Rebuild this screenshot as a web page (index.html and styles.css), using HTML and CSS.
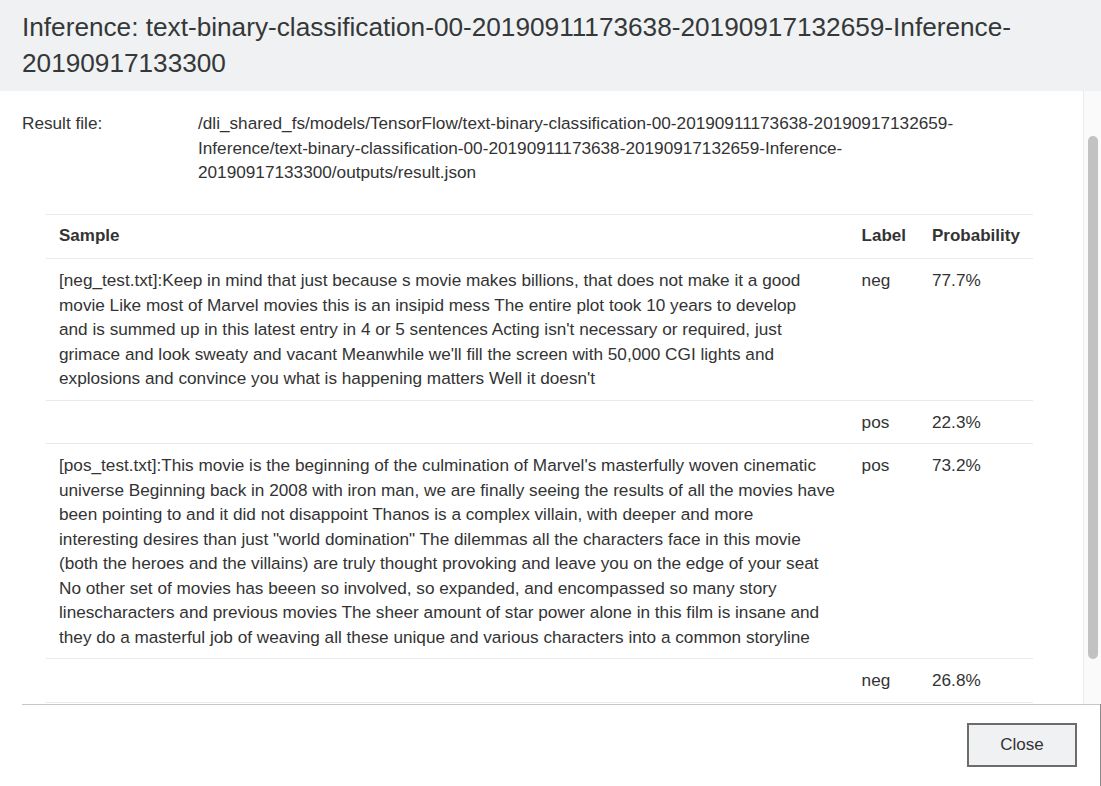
FILE: index.html
```html
<!DOCTYPE html>
<html>
<head>
<meta charset="utf-8">
<link rel="stylesheet" href="styles.css">
</head>
<body>
<div class="modal">
  <div class="modal-header">
    <h1 class="title">Inference: text-binary-classification-00-20190911173638-20190917132659-Inference-20190917133300</h1>
  </div>
  <div class="modal-main">
    <div class="modal-body">
      <div class="info-row">
        <div class="info-label">Result file:</div>
        <div class="info-value">/dli_shared_fs/models/TensorFlow/text-binary-classification-00-20190911173638-20190917132659-Inference/text-binary-classification-00-20190911173638-20190917132659-Inference-20190917133300/outputs/result.json</div>
      </div>
      <table class="results">
        <thead>
          <tr><th class="col-sample">Sample</th><th class="col-label">Label</th><th class="col-prob">Probability</th></tr>
        </thead>
        <tbody>
          <tr>
            <td class="sample">[neg_test.txt]:Keep in mind that just because s movie makes billions, that does not make it a good<br>movie Like most of Marvel movies this is an insipid mess The entire plot took 10 years to develop<br>and is summed up in this latest entry in 4 or 5 sentences Acting isn't necessary or required, just<br>grimace and look sweaty and vacant Meanwhile we'll fill the screen with 50,000 CGI lights and<br>explosions and convince you what is happening matters Well it doesn't</td>
            <td>neg</td><td>77.7%</td>
          </tr>
          <tr><td></td><td>pos</td><td>22.3%</td></tr>
          <tr>
            <td class="sample">[pos_test.txt]:This movie is the beginning of the culmination of Marvel's masterfully woven cinematic<br>universe Beginning back in 2008 with iron man, we are finally seeing the results of all the movies have<br>been pointing to and it did not disappoint Thanos is a complex villain, with deeper and more<br>interesting desires than just "world domination" The dilemmas all the characters face in this movie<br>(both the heroes and the villains) are truly thought provoking and leave you on the edge of your seat<br>No other set of movies has beeen so involved, so expanded, and encompassed so many story<br>linescharacters and previous movies The sheer amount of star power alone in this film is insane and<br>they do a masterful job of weaving all these unique and various characters into a common storyline</td>
            <td>pos</td><td>73.2%</td>
          </tr>
          <tr><td></td><td>neg</td><td>26.8%</td></tr>
        </tbody>
      </table>
    </div>
    <div class="scrollbar"><div class="thumb"></div></div>
  </div>
  <div class="modal-footer">
    <button class="btn-close">Close</button>
  </div>
</div>
</body>
</html>
```
FILE: styles.css
```css
* { box-sizing: border-box; }
html, body {
  margin: 0;
  padding: 0;
  background: #ffffff;
}
body {
  font-family: "Liberation Sans", Arial, sans-serif;
  color: #333333;
  width: 1101px;
  height: 786px;
  overflow: hidden;
}
.modal {
  display: flex;
  flex-direction: column;
  height: 786px;
}
.modal-header {
  background: #f0f1f3;
  padding: 9px 22px 9px 22px;
  height: 91px;
}
.title {
  margin: 0;
  font-size: 26.2px;
  font-weight: normal;
  line-height: 36px;
  color: #343838;
}
.modal-main {
  display: flex;
  height: 613px;
  overflow: hidden;
}
.modal-body {
  flex: 1;
  padding: 20px 0 0 22px;
  font-size: 17.2px;
  line-height: 24.5px;
  overflow: hidden;
}
.info-row {
  display: flex;
  width: 1000px;
}
.info-label {
  width: 176px;
  flex: none;
}
.info-value {
  flex: 1;
}
.results {
  margin: 29px 0 0 24px;
  width: 987px;
  border-collapse: collapse;
  font-size: 17.2px;
  line-height: 24.5px;
}
.results th, .results td {
  text-align: left;
  vertical-align: top;
  padding: 9px 13px 9px 13px;
  border-top: 1px solid #e6eaea;
}
.results th {
  padding-top: 9.5px;
  padding-bottom: 9.5px;
}
.results td.sample {
  white-space: nowrap;
}
.results tr:last-child td {
  border-bottom: 1px solid #e6eaea;
}
.results th {
  font-weight: bold;
  font-size: 17px;
}
.col-label { width: 70px; }
.col-prob { width: 114px; }
.scrollbar {
  width: 18px;
  flex: none;
  background: #fafafa;
  border-left: 1px solid #ececec;
  padding: 45px 3px 0 4px;
}
.thumb {
  width: 10px;
  height: 523px;
  background: #c2c2c2;
  border-radius: 5px;
}
.modal-footer {
  flex: 1;
  display: flex;
  justify-content: flex-end;
  align-items: flex-start;
  margin-left: 22px;
  border-top: 1px solid #c6c6c6;
  padding: 18px 24px 0 0;
  position: relative;
}
.modal-footer::after {
  content: "";
  position: absolute;
  right: 0;
  top: -1px;
  bottom: 0;
  width: 1px;
  background: #8a8a8a;
}
.btn-close {
  width: 110px;
  height: 44px;
  border: 2px solid #6c6c6c;
  background: #f0f1f3;
  font-family: "Liberation Sans", Arial, sans-serif;
  font-size: 17px;
  color: #333333;
  padding: 0;
}
```
